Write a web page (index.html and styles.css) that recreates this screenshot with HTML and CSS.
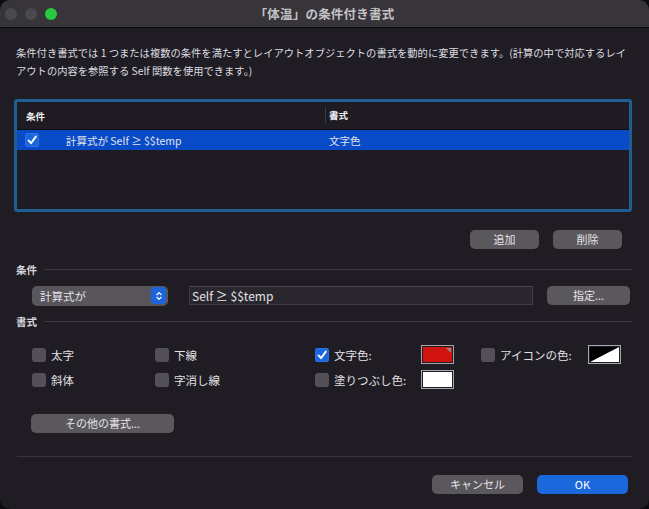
FILE: index.html
```html
<!DOCTYPE html>
<html lang="ja">
<head>
    <meta charset="UTF-8">
    <title>条件付き書式</title>
    <link rel="stylesheet" href="styles.css">
</head>
<body>

<div class="window">
    <div class="titlebar">
        <div class="lights">
            <span class="light"></span>
            <span class="light"></span>
            <span class="light green"></span>
        </div>
        <div class="title">「体温」の条件付き書式</div>
        <div></div>
    </div>

    <div class="content">
        <p class="desc">条件付き書式では 1 つまたは複数の条件を満たすとレイアウトオブジェクトの書式を動的に変更できます。(計算の中で対応するレイ<br>アウトの内容を参照する Self 関数を使用できます。)</p>

        <div class="list">
            <div class="list-head">
                <div class="col-cond">条件</div>
                <div class="col-fmt">書式</div>
            </div>
            <div class="list-row selected">
                <div class="col-cond">
                    <span class="check on">
                        <svg viewBox="0 0 14 14"><path d="M3.5 7.4 L6 10.2 L10.8 3.6" /></svg>
                    </span>
                    <span class="row-text">計算式が Self ≥ $$temp</span>
                </div>
                <div class="col-fmt">文字色</div>
            </div>
        </div>

        <div class="list-buttons">
            <button class="btn small">追加</button>
            <button class="btn small">削除</button>
        </div>

        <div class="section-label cond-label"><span>条件</span></div>

        <div class="cond-row">
            <div class="popup">
                <span>計算式が</span>
                <span class="popup-arrows">
                    <svg viewBox="0 0 14 14"><path d="M4.5 5.5 L7 3 L9.5 5.5 M4.5 8.5 L7 11 L9.5 8.5" /></svg>
                </span>
            </div>
            <div class="field">Self ≥ $$temp</div>
            <button class="btn spec">指定...</button>
        </div>

        <div class="section-label fmt-label"><span>書式</span></div>

        <div class="fmt-grid">
            <label class="opt"><span class="check"></span>太字</label>
            <label class="opt"><span class="check"></span>下線</label>
            <label class="opt">
                <span class="check on">
                    <svg viewBox="0 0 14 14"><path d="M3.5 7.4 L6 10.2 L10.8 3.6" /></svg>
                </span>文字色:
            </label>
            <span class="well red"><span class="corner"></span></span>
            <label class="opt"><span class="check"></span>アイコンの色:</label>
            <span class="well icon">
                <svg viewBox="0 0 31 16" preserveAspectRatio="none"><path d="M0 16 L31 0 L31 16 Z" fill="#fff" /></svg>
            </span>

            <label class="opt"><span class="check"></span>斜体</label>
            <label class="opt"><span class="check"></span>字消し線</label>
            <label class="opt"><span class="check"></span>塗りつぶし色:</label>
            <span class="well white"></span>
        </div>

        <button class="btn more">その他の書式...</button>

        <div class="divider"></div>

        <div class="footer">
            <button class="btn wide">キャンセル</button>
            <button class="btn wide primary">OK</button>
        </div>
    </div>
</div>

</body>
</html>
```

FILE: styles.css
```css
body {
    margin: 0;
    background: #0d0c10;
    font-family: "Noto Sans CJK JP", "Noto Sans", sans-serif;
    color: #e4e2e7;
}
.window {
    width: 649px;
    height: 509px;
    background: #1f1c23;
    border-radius: 10px;
    overflow: hidden;
}
.titlebar {
    height: 27px;
    background: #37353a;
    border-bottom: 1px solid #0b0a0d;
    display: grid;
    grid-template-columns: 1fr auto 1fr;
    align-items: center;
}
.lights {
    display: flex;
    gap: 8px;
    padding-left: 5px;
}
.light {
    width: 12px;
    height: 12px;
    border-radius: 50%;
    background: #4b494f;
}
.light.green {
    background: #2ac840;
}
.title {
    font-size: 12.5px;
    font-weight: bold;
    color: #c4c2c7;
    letter-spacing: 0.2px;
}
.content {
    padding: 0 17px 0 16px;
}
.desc {
    margin: 16px 0 0;
    font-size: 10.3px;
    line-height: 18px;
    color: #dedce1;
}

/* condition list */
.list {
    margin: 19px 0 0 -2px;
    width: 612px;
    height: 107px;
    border: 3px solid #1e5e93;
    border-radius: 3px;
    background: #1e1b22;
}
.list-head,
.list-row {
    display: flex;
    align-items: center;
}
.list-head {
    height: 27px;
    border-bottom: 1px solid #0c0b0e;
    font-size: 9.5px;
    font-weight: bold;
    color: #f0eef2;
}
.list-head .col-cond {
    padding-left: 9px;
}
.list-head .col-fmt {
    border-left: 1px solid #3c3a40;
    padding-left: 3px;
    height: 17px;
    line-height: 17px;
}
.col-cond {
    width: 308px;
    box-sizing: border-box;
    display: flex;
    align-items: center;
}
.list-row {
    height: 20px;
    font-size: 10.5px;
}
.list-row.selected {
    background: #094bc7;
}
.list-row .col-cond {
    padding-left: 8px;
}
.list-row .col-fmt {
    padding-left: 4px;
}
.row-text {
    margin-left: 27px;
    color: #e2e4ee;
}

/* checkboxes */
.check {
    width: 14px;
    height: 14px;
    border-radius: 3px;
    background: #535057;
    flex: none;
    display: inline-flex;
}
.check.on {
    background: #1b66dc;
    box-shadow: inset 0 0 0 1px #2a74e6;
}
.check svg {
    width: 14px;
    height: 14px;
}
.check path {
    fill: none;
    stroke: #fff;
    stroke-width: 1.9;
    stroke-linecap: round;
    stroke-linejoin: round;
}

/* buttons */
.btn {
    font-family: inherit;
    font-size: 11px;
    color: #e6e4e9;
    background: #5a575d;
    border: none;
    border-radius: 5px;
    height: 19px;
    padding: 0;
    line-height: 19px;
}
.btn.small {
    width: 69px;
}
.btn.primary {
    background: #1b68dd;
    color: #fff;
}
.list-buttons {
    display: flex;
    justify-content: flex-end;
    gap: 14px;
    margin: 18px 10px 0 0;
}

/* section labels with rule */
.section-label {
    display: flex;
    align-items: center;
    gap: 7px;
    font-size: 10.5px;
    font-weight: bold;
    color: #d6d4da;
    height: 16px;
}
.section-label::after {
    content: "";
    flex: 1;
    border-top: 1px solid #3a373e;
}
.cond-label {
    margin-top: 12px;
}
.fmt-label {
    margin-top: 7px;
}

/* condition row */
.cond-row {
    display: flex;
    align-items: center;
    margin: 8px 0 0 16px;
    height: 21px;
}
.popup {
    width: 136px;
    height: 20px;
    background: #58555b;
    border-radius: 5px;
    display: flex;
    align-items: center;
    justify-content: space-between;
    font-size: 11.5px;
    padding-left: 8px;
    box-sizing: border-box;
}
.popup-arrows {
    width: 15px;
    height: 17px;
    margin-right: 2px;
    background: #1c64dc;
    border-radius: 4px;
    display: flex;
    align-items: center;
    justify-content: center;
}
.popup-arrows svg {
    width: 12px;
    height: 12px;
}
.popup-arrows path {
    fill: none;
    stroke: #fff;
    stroke-width: 1.4;
    stroke-linecap: round;
    stroke-linejoin: round;
}
.field {
    margin-left: 21px;
    width: 344px;
    height: 19px;
    box-sizing: border-box;
    background: #29262d;
    border: 1px solid #3f3c43;
    border-top-color: #4a474e;
    font-size: 12px;
    line-height: 17px;
    padding-left: 2px;
}
.btn.spec {
    width: 83px;
    margin-left: 14px;
}

/* format options */
.fmt-grid {
    display: grid;
    grid-template-columns: 123px 160px 106px 60px 107px 40px;
    grid-template-rows: 19px 19px;
    row-gap: 6px;
    align-items: center;
    margin: 16px 0 0 16px;
}
.opt {
    display: flex;
    align-items: center;
    gap: 5px;
    font-size: 11.5px;
    color: #e2e0e5;
    white-space: nowrap;
}
.well {
    width: 33px;
    height: 19px;
    box-sizing: border-box;
    border: 1px solid #a8a6ab;
    padding: 1px;
    background: #1f1c23;
    display: block;
    position: relative;
}
.well.red {
    background: #d1130f;
    box-shadow: inset 0 0 0 1px #1f1c23;
}
.well .corner {
    position: absolute;
    top: 2px;
    right: 2px;
    border-top: 5px solid #8c8a8e;
    border-left: 5px solid transparent;
}
.well.white {
    background: #fff;
    box-shadow: inset 0 0 0 1px #1f1c23;
}
.well.icon {
    background: #000;
    box-shadow: inset 0 0 0 1px #1f1c23;
}
.well.icon svg {
    display: block;
    width: 100%;
    height: 100%;
}

.btn.more {
    display: block;
    width: 143px;
    margin: 25px 0 0 15px;
}
.divider {
    margin: 23px 0 0 1px;
    border-top: 1px solid #38353c;
}
.footer {
    display: flex;
    justify-content: flex-end;
    gap: 14px;
    margin: 18px 4px 0 0;
}
.btn.wide {
    width: 91px;
}
```
